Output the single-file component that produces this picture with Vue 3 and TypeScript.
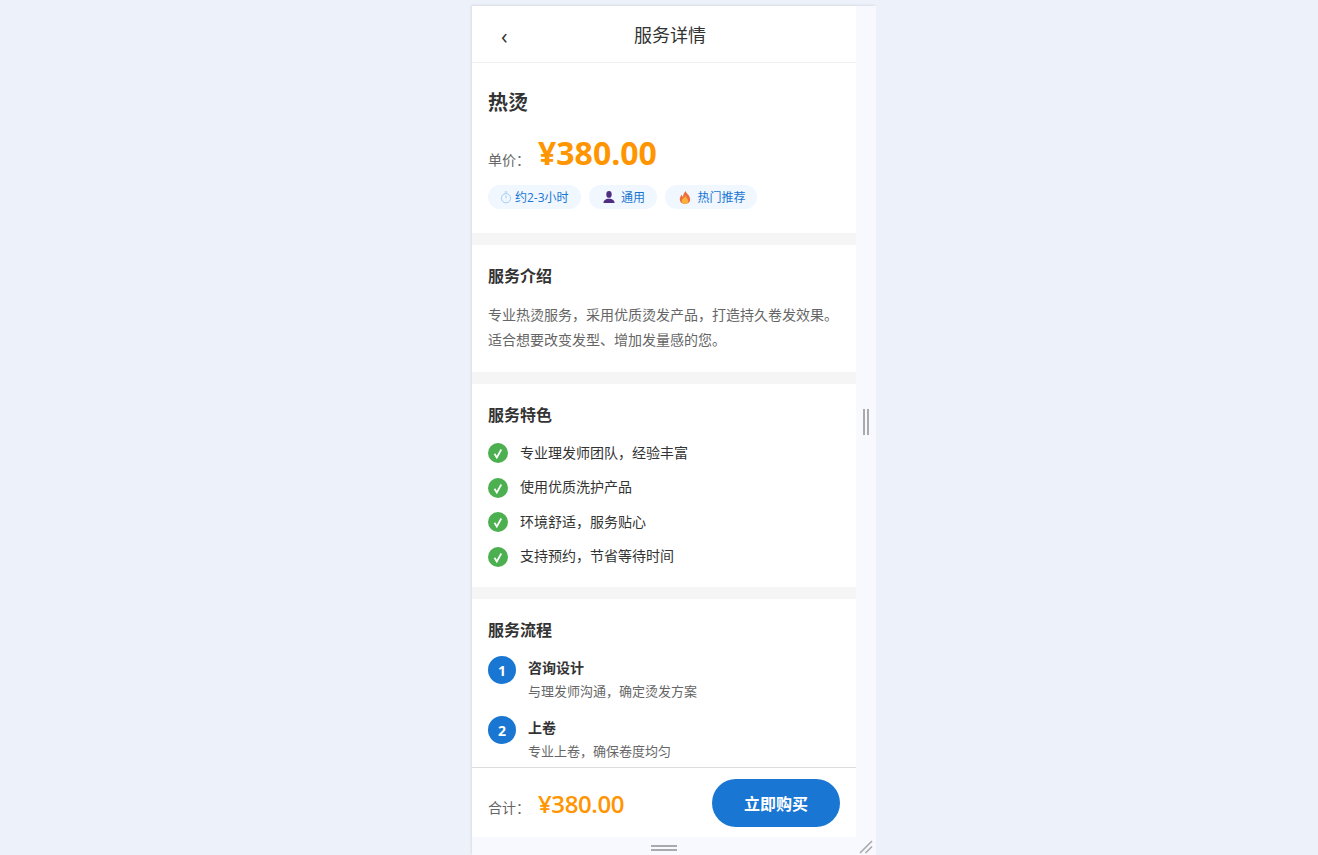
<template>
  <div class="page">
    <div class="frame">
      <div class="phone">
        <header class="nav">
          <span class="back">‹</span>
          <span class="nav-title">服务详情</span>
        </header>

        <main class="content">
          <section class="card hero">
            <h1 class="name">热烫</h1>
            <div class="price-row">
              <span class="price-label">单价：</span>
              <span class="price">¥380.00</span>
            </div>
            <div class="tags">
              <span class="tag">
                <svg class="tag-icon" viewBox="0 0 12 13" width="12" height="13">
                  <circle cx="6" cy="7.2" r="4.6" fill="none" stroke="#a9cdf0" stroke-width="1" />
                  <path d="M4.600 1h2.800M6 4.400v3" fill="none" stroke="#a9cdf0" stroke-width="1" />
                </svg>
                约2-3小时
              </span>
              <span class="tag tag-wide">
                <svg class="tag-icon" viewBox="0 0 12 12" width="12" height="12">
                  <ellipse cx="6" cy="3.400" rx="2.700" ry="3.400" fill="#4f2d7f" />
                  <path d="M.4 12c0-2.700 2.400-3.800 4-4.300h3.200c1.600.5 4 1.600 4 4.300z" fill="#4f2d7f" />
                </svg>
                通用
              </span>
              <span class="tag tag-wide">
                <svg class="tag-icon" viewBox="0 0 12 13" width="12" height="13">
                  <path d="M6.600 0c.4 2.600 4.600 4.300 4.600 8.300 0 2.800-2.300 4.700-5.200 4.700S.8 11.100.8 8.300c0-2.100 1-3.400 2-4.500.2 1.100.6 1.800 1.300 2.100C3.900 4 5 1.800 6.600 0z" fill="#ec6f3e" />
                  <path d="M6.300 4.800c.3 1.700 3 2.900 3 5.200 0 1.700-1.400 2.900-3.300 2.900S2.700 11.700 2.700 10c0-2.100 2.900-3.100 3.600-5.200z" fill="#fbb03b" />
                </svg>
                热门推荐
              </span>
            </div>
          </section>

          <section class="card intro">
            <h2 class="section-title">服务介绍</h2>
            <p class="intro-text">专业热烫服务，采用优质烫发产品，打造持久卷发效果。适合想要改变发型、增加发量感的您。</p>
          </section>

          <section class="card features">
            <h2 class="section-title">服务特色</h2>
            <ul class="feature-list">
              <li v-for="item in features" :key="item" class="feature">
                <span class="check">
                  <svg viewBox="0 0 20 20" width="20" height="20">
                    <path d="M6.500 10.800l2.300 3.700 4.500-8" fill="none" stroke="#fff" stroke-width="1.700" />
                  </svg>
                </span>
                <span class="feature-text">{{ item }}</span>
              </li>
            </ul>
          </section>

          <section class="card process">
            <h2 class="section-title">服务流程</h2>
            <div v-for="(step, i) in steps" :key="step.title" class="step">
              <span class="step-no">{{ i + 1 }}</span>
              <div>
                <div class="step-title">{{ step.title }}</div>
                <div class="step-desc">{{ step.desc }}</div>
              </div>
            </div>
          </section>
        </main>

        <footer class="bar">
          <div class="total">
            <span class="price-label">合计：</span>
            <span class="total-price">¥380.00</span>
          </div>
          <button class="buy">立即购买</button>
        </footer>
      </div>

      <div class="side-handle"><i /><i /></div>
      <div class="bottom-handle"><i /><i /></div>
      <div class="corner">
        <svg viewBox="0 0 20 18" width="20" height="18">
          <path d="M4 16L16 4M9.500 16L16 9.500" fill="none" stroke="#aaa" stroke-width="1.600" />
        </svg>
      </div>
    </div>
  </div>
</template>

<script setup lang="ts">
const features: string[] = [
  '专业理发师团队，经验丰富',
  '使用优质洗护产品',
  '环境舒适，服务贴心',
  '支持预约，节省等待时间',
]

const steps: { title: string; desc: string }[] = [
  { title: '咨询设计', desc: '与理发师沟通，确定烫发方案' },
  { title: '上卷', desc: '专业上卷，确保卷度均匀' },
]
</script>

<style>
html,
body {
  margin: 0;
  background: #ecf1fa;
}
</style>

<style scoped>
.page {
  height: 855px;
  overflow: hidden;
  padding: 6px 0 0 472px;
  box-sizing: border-box;
  font-family: "Open Sans", "Noto Sans CJK SC", sans-serif;
  color: #333;
}

.frame {
  width: 404px;
  height: 849px;
  display: grid;
  grid-template-columns: 384px 20px;
  grid-template-rows: 831px 18px;
  background: #f8f9fe;
  box-shadow: -1px -1px 2px rgba(0, 0, 0, 0.08);
}

.phone {
  display: flex;
  flex-direction: column;
  min-height: 0;
  background: #fff;
}

.nav {
  position: relative;
  height: 56px;
  flex: none;
  display: flex;
  align-items: center;
  justify-content: center;
  padding-left: 12px;
  border-bottom: 1px solid #eee;
}

.back {
  position: absolute;
  left: 29px;
  top: 14px;
  font-size: 22px;
  line-height: 30px;
  color: #333;
}

.nav-title {
  font-size: 18px;
  color: #333;
}

.content {
  flex: 1;
  min-height: 0;
  overflow: hidden;
  background: #f5f5f5;
}

.card {
  background: #fff;
  padding: 0 16px;
  margin-bottom: 12px;
}

.hero {
  height: 170px;
  box-sizing: border-box;
  padding-top: 25px;
}

.name {
  margin: 0;
  font-size: 20px;
  line-height: 30px;
  font-weight: 700;
}

.price-row {
  display: flex;
  align-items: baseline;
  margin-top: 15px;
  height: 40px;
}

.price-label {
  font-size: 14px;
  color: #666;
  width: 50px;
}

.price {
  font-size: 32px;
  font-weight: 700;
  color: #ff9500;
  line-height: 40px;
}

.tags {
  display: flex;
  gap: 8px;
  margin-top: 12px;
}

.tag {
  height: 24px;
  display: flex;
  align-items: center;
  gap: 3px;
  padding: 0 12px;
  border-radius: 12px;
  background: #f0f7ff;
  font-size: 12px;
  color: #1976d2;
}

.tag-wide {
  padding: 0 12px 0 14px;
  gap: 6.400px;
}

.intro {
  height: 127px;
  box-sizing: border-box;
  padding-top: 19px;
}

.section-title {
  margin: 0;
  font-size: 16px;
  line-height: 24px;
  font-weight: 700;
}

.intro-text {
  margin: 14px 0 0;
  font-size: 14px;
  line-height: 25px;
  color: #666;
}

.features {
  height: 203px;
  box-sizing: border-box;
  padding-top: 19px;
}

.feature-list {
  list-style: none;
  margin: 9px 0 0;
  padding: 0;
}

.feature {
  display: flex;
  align-items: center;
  gap: 12px;
  height: 34.600px;
  font-size: 14px;
}

.feature-text {
  margin-top: -3.500px;
}

.check {
  width: 20px;
  height: 20px;
  border-radius: 50%;
  background: #4caf50;
  display: flex;
}

.process {
  padding: 19px 16px 20px;
}

.step {
  display: flex;
  gap: 12px;
  margin-top: 14px;
}

.step-no {
  flex: none;
  width: 28px;
  height: 28px;
  border-radius: 50%;
  background: #1976d2;
  color: #fff;
  font-size: 14px;
  font-weight: 700;
  display: flex;
  align-items: center;
  justify-content: center;
}

.step-title {
  font-size: 14px;
  font-weight: 700;
  line-height: 24px;
}

.step-desc {
  font-size: 13px;
  line-height: 22px;
  color: #666;
}

.bar {
  flex: none;
  height: 70px;
  box-sizing: border-box;
  display: flex;
  align-items: center;
  justify-content: space-between;
  padding: 0 16px;
  background: #fff;
  border-top: 1px solid #ddd;
}

.total {
  display: flex;
  align-items: baseline;
  padding-top: 2px;
}

.total-price {
  font-size: 24px;
  font-weight: 600;
  letter-spacing: -0.4px;
  color: #ff9500;
}

.buy {
  width: 128px;
  height: 48px;
  border: 0;
  border-radius: 24px;
  background: #1976d2;
  color: #fff;
  font-family: inherit;
  font-size: 16px;
  font-weight: 700;
}

.side-handle {
  display: flex;
  justify-content: center;
  align-items: center;
  gap: 2px;
}

.side-handle i {
  width: 2px;
  height: 26px;
  background: #aaa;
}

.bottom-handle {
  display: flex;
  flex-direction: column;
  align-items: center;
  justify-content: center;
  gap: 2px;
  padding-top: 4px;
  box-sizing: border-box;
}

.bottom-handle i {
  width: 26px;
  height: 2px;
  background: #aaa;
}

.corner {
  display: flex;
}
</style>
